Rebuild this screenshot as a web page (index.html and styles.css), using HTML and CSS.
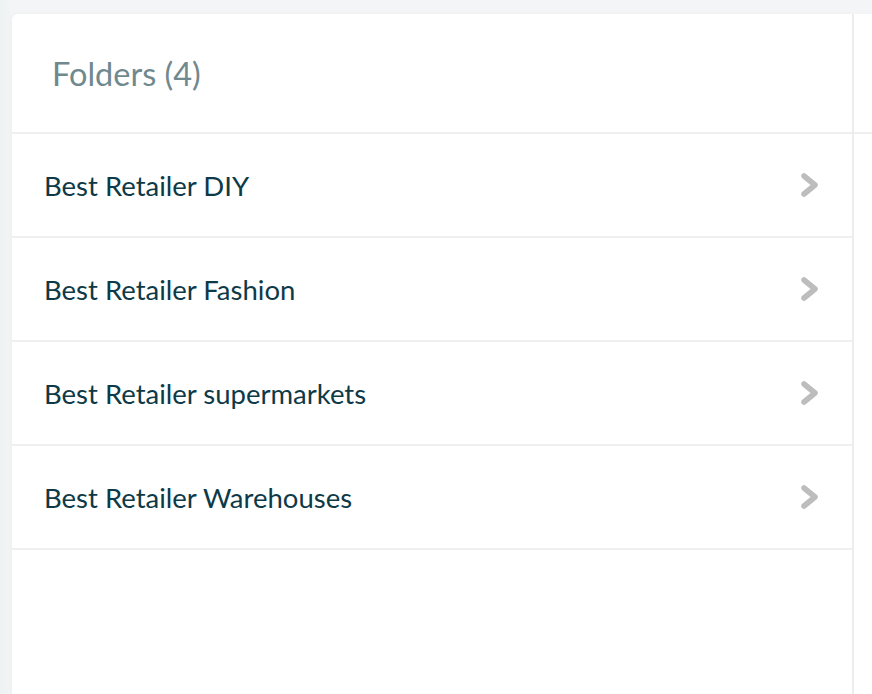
FILE: index.html
```html
<!DOCTYPE html>
<html lang="en">
<head>
  <meta charset="UTF-8">
  <title>Folders</title>
  <link rel="stylesheet" href="styles.css">
</head>
<body>
  <div class="layout">
    <section class="folders">
      <header class="folders-head">
        <h2>Folders (4)</h2>
      </header>
      <ul class="folder-list">
        <li class="folder">
          <span class="folder-name">Best Retailer DIY</span>
          <svg class="chevron" viewBox="0 0 20 24" width="20" height="24"><path d="M4 3 L15 12 L4 21" fill="none" stroke="#bdbdbd" stroke-width="5.5" stroke-linejoin="round" stroke-linecap="round"/></svg>
        </li>
        <li class="folder">
          <span class="folder-name">Best Retailer Fashion</span>
          <svg class="chevron" viewBox="0 0 20 24" width="20" height="24"><path d="M4 3 L15 12 L4 21" fill="none" stroke="#bdbdbd" stroke-width="5.5" stroke-linejoin="round" stroke-linecap="round"/></svg>
        </li>
        <li class="folder">
          <span class="folder-name">Best Retailer supermarkets</span>
          <svg class="chevron" viewBox="0 0 20 24" width="20" height="24"><path d="M4 3 L15 12 L4 21" fill="none" stroke="#bdbdbd" stroke-width="5.5" stroke-linejoin="round" stroke-linecap="round"/></svg>
        </li>
        <li class="folder">
          <span class="folder-name">Best Retailer Warehouses</span>
          <svg class="chevron" viewBox="0 0 20 24" width="20" height="24"><path d="M4 3 L15 12 L4 21" fill="none" stroke="#bdbdbd" stroke-width="5.5" stroke-linejoin="round" stroke-linecap="round"/></svg>
        </li>
      </ul>
    </section>
    <section class="detail">
      <div class="detail-head"></div>
    </section>
  </div>
</body>
</html>
```

FILE: styles.css
```css
html, body {
  height: 100%;
}
body {
  margin: 0;
  background: linear-gradient(90deg, #eef2f3, #f3f5f6 12px);
  font-family: "Lato", "Open Sans", sans-serif;
  overflow: hidden;
}
.layout {
  display: flex;
  padding: 14px 0 0 12px;
  height: 100%;
  box-sizing: border-box;
}
.folders {
  width: 840px;
  flex: none;
  background: #fff;
  border-right: 2px solid #ededed;
  border-top-left-radius: 6px;
  box-shadow: -1px 0 4px rgba(0, 0, 0, 0.03);
}
.folders-head {
  height: 118px;
  display: flex;
  align-items: center;
  padding-left: 40px;
  border-bottom: 2px solid #efefef;
}
.folders-head h2 {
  margin: 0;
  font-weight: 400;
  font-size: 32.5px;
  color: #70898f;
}
.folder-list {
  list-style: none;
  margin: 0;
  padding: 0;
}
.folder {
  height: 102px;
  display: flex;
  align-items: center;
  justify-content: space-between;
  padding: 0 32px 0 32px;
  border-bottom: 2px solid #efefef;
}
.folder-name {
  font-size: 27.5px;
  color: #0e3a48;
}
.chevron {
  display: block;
}
.detail {
  flex: 1;
  background: #fff;
}
.detail-head {
  height: 118px;
  border-bottom: 2px solid #efefef;
}
```
